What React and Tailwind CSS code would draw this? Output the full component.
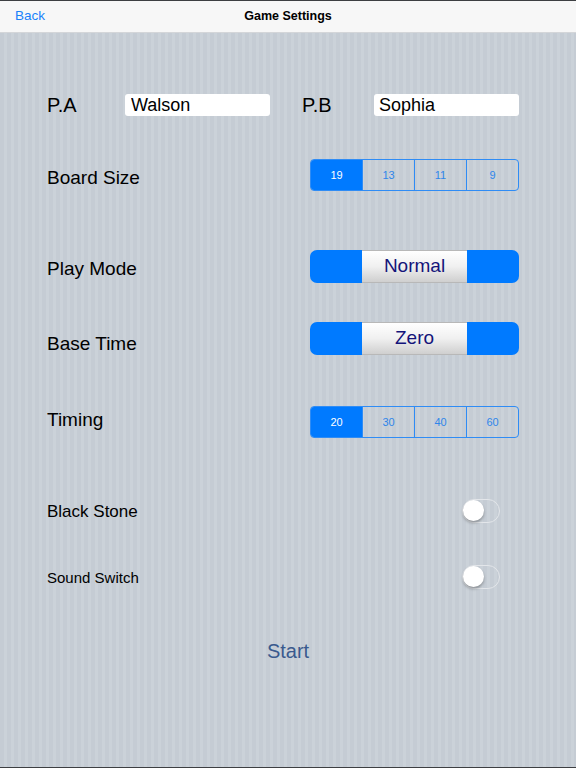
import { useState } from "react";

const font = { fontFamily: '"Liberation Sans", Arial, sans-serif' };

function Segmented({ options, selected, onSelect }) {
    return (
        <div className="flex w-[209px] h-[32px] rounded-[4px] border border-[#2f8cf5] overflow-hidden">
            {options.map((opt, i) => (
                <button
                    key={opt}
                    onClick={() => onSelect(i)}
                    className={
                        "flex-1 flex items-center justify-center text-[11px] " +
                        (i > 0 ? "border-l border-[#2f8cf5] " : "") +
                        (i === selected ? "bg-[#007aff] text-white" : "text-[#2f86ea]")
                    }
                >
                    {opt}
                </button>
            ))}
        </div>
    );
}

function Stepper({ value }) {
    return (
        <div className="flex w-[209px] h-[33px]">
            <div className="w-[52px] bg-[#007aff] rounded-l-[7px]" />
            <div className="flex-1 flex items-center justify-center text-[19px] text-[#14147a] bg-gradient-to-b from-white via-[#f0f0f0] to-[#cfcfcf] border-y border-[#b8b8b8]">
                {value}
            </div>
            <div className="w-[52px] bg-[#007aff] rounded-r-[7px]" />
        </div>
    );
}

function Toggle({ on, onChange }) {
    return (
        <button
            onClick={() => onChange(!on)}
            className={
                "relative w-[38px] h-[24px] rounded-full border-[1.5px] " +
                (on ? "bg-[#4cd964] border-[#4cd964]" : "border-[#e3e6ea]")
            }
        >
            <span
                className={
                    "absolute top-[0px] w-[21px] h-[21px] rounded-full bg-white shadow-[0_2px_3px_rgba(0,0,0,0.3)] " +
                    (on ? "left-[14px]" : "left-[0px]")
                }
            />
        </button>
    );
}

export default function App() {
    const [pa, setPa] = useState("Walson");
    const [pb, setPb] = useState("Sophia");
    const [board, setBoard] = useState(0);
    const [timing, setTiming] = useState(0);
    const [blackStone, setBlackStone] = useState(false);
    const [sound, setSound] = useState(false);

    return (
        <div
            className="w-[576px] h-[768px] flex flex-col border-y border-[#3d3f42] overflow-hidden"
            style={{
                ...font,
                backgroundImage:
                    "repeating-linear-gradient(90deg, #c5ccd4 0px, #c5ccd4 4px, #cbd2d9 4px, #cbd2d9 7px)",
            }}
        >
            {/* Nav bar */}
            <div className="h-[32px] shrink-0 bg-[#f7f7f7] border-b border-[#d4d6d9] flex items-center relative">
                <button className="ml-[15px] text-[13.5px] text-[#1a82fb]">Back</button>
                <div className="absolute left-0 right-0 text-center text-[12.5px] font-bold text-black pointer-events-none">
                    Game Settings
                </div>
            </div>

            <div className="flex flex-col pl-[47px] pr-[57px] text-black">
                {/* Players */}
                <div className="mt-[55px] h-[34px] flex items-center">
                    <span className="w-[78px] text-[20px]">P.A</span>
                    <input
                        value={pa}
                        onChange={(e) => setPa(e.target.value)}
                        className="w-[145px] h-[22px] bg-white rounded-[3px] px-[6px] text-[18px] outline-none"
                    />
                    <span className="ml-[32px] w-[72px] text-[20px]">P.B</span>
                    <input
                        value={pb}
                        onChange={(e) => setPb(e.target.value)}
                        className="w-[145px] h-[22px] bg-white rounded-[3px] px-[5px] text-[18px] outline-none"
                    />
                </div>

                {/* Board size */}
                <div className="mt-[37px] flex items-center justify-between">
                    <span className="text-[19px] leading-none translate-y-[2px]">Board Size</span>
                    <Segmented options={["19", "13", "11", "9"]} selected={board} onSelect={setBoard} />
                </div>

                {/* Play mode */}
                <div className="mt-[59px] flex items-center justify-between">
                    <span className="text-[19px] leading-none translate-y-[2px]">Play Mode</span>
                    <Stepper value="Normal" />
                </div>

                {/* Base time */}
                <div className="mt-[39px] flex items-center justify-between">
                    <span className="text-[19px] leading-none translate-y-[5px]">Base Time</span>
                    <Stepper value="Zero" />
                </div>

                {/* Timing */}
                <div className="mt-[51px] flex items-center justify-between">
                    <span className="text-[19px] leading-none -translate-y-[3px]">Timing</span>
                    <Segmented options={["20", "30", "40", "60"]} selected={timing} onSelect={setTiming} />
                </div>

                {/* Black stone */}
                <div className="mt-[61px] flex items-center justify-between pr-[19px]">
                    <span className="text-[17px] leading-none">Black Stone</span>
                    <Toggle on={blackStone} onChange={setBlackStone} />
                </div>

                {/* Sound switch */}
                <div className="mt-[42px] flex items-center justify-between pr-[19px]">
                    <span className="text-[15px] leading-none">Sound Switch</span>
                    <Toggle on={sound} onChange={setSound} />
                </div>
            </div>

            <div className="mt-[52px] flex justify-center">
                <button className="text-[20px] leading-none text-[#3a5a8e]">Start</button>
            </div>
        </div>
    );
}
